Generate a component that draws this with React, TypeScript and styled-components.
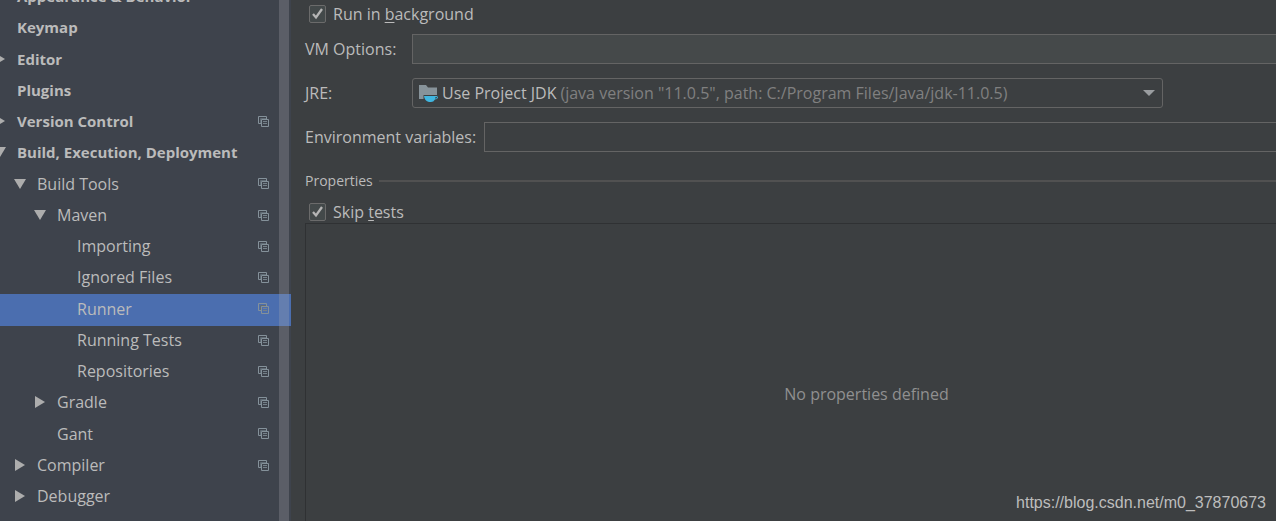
import React from "react";
import styled, { createGlobalStyle } from "styled-components";

const GlobalStyle = createGlobalStyle`
  * { box-sizing: border-box; }
  body {
    margin: 0;
    background: #3c3f41;
    color: #bbbbbb;
    font: 16px/20px "Open Sans", "Noto Sans", sans-serif;
  }
  input, select, button { font: inherit; color: inherit; margin: 0; }
`;

const Window = styled.div`
  position: relative;
  display: flex;
  height: 100vh;
  overflow: hidden;
`;

const Sidebar = styled.nav`
  position: relative;
  flex: 0 0 291px;
  background: #3e434c;
  overflow: hidden;
`;

const Tree = styled.ul`
  display: grid;
  grid-auto-rows: 31px 31px 32px 31px;
  margin: -18px 0 0;
  padding: 0;
  list-style: none;
`;

const TreeItem = styled.li`
  display: grid;
`;

const Row = styled.button<{ $level: number; $selected?: boolean }>`
  display: flex;
  align-items: center;
  padding: 0 22px 3px ${(p) => p.$level * 20}px;
  border: 0;
  background: ${(p) => (p.$selected ? "#4b6eaf" : "transparent")};
  font-weight: ${(p) => (p.$level === 0 ? 700 : 400)};
  font-size: ${(p) => (p.$level === 0 ? 15 : 16)}px;
  text-align: left;
  white-space: nowrap;
`;

const Twist = styled.span`
  flex: 0 0 17px;
  display: flex;
  margin-left: -6px;
  margin-right: 6px;
`;

const Label = styled.span`
  flex: 1;
`;

const Scrollbar = styled.div`
  position: absolute;
  inset: 0 2px 0 auto;
  width: 10px;
  background: rgba(170, 170, 178, 0.27);
  pointer-events: none;
`;

const Main = styled.main`
  flex: 1;
  min-width: 0;
  display: flex;
  flex-direction: column;
  margin: 0 -152px -44px 0;
  padding: 4px 0 0 14px;
`;

const CheckLine = styled.label`
  display: flex;
  align-items: center;
  gap: 7px;
  height: 20px;
  padding-left: 4px;
`;

const CheckFrame = styled.span`
  display: grid;
  width: 17px;
  height: 18px;

  > * { grid-area: 1 / 1; }
  svg { pointer-events: none; }
`;

const Checkbox = styled.input`
  appearance: none;
  width: 17px;
  height: 18px;
  border: 1px solid #6b6b6b;
  border-radius: 2px;
  background: #43494a;

  &:not(:checked) + svg { visibility: hidden; }
`;

const Mnemonic = styled.span`
  text-decoration: underline;
  text-underline-offset: 2px;
`;

const Field = styled.div<{ $labelWidth: number; $gap: number }>`
  display: grid;
  grid-template-columns: ${(p) => p.$labelWidth}px 1fr;
  align-items: center;
  height: 30px;
  margin-top: ${(p) => p.$gap}px;
`;

const TextInput = styled.input<{ $filled?: boolean }>`
  width: 100%;
  height: 30px;
  padding: 0 6px;
  border: 1px solid #646464;
  background: ${(p) => (p.$filled ? "#45494a" : "transparent")};
`;

const Combo = styled.div`
  position: relative;
  max-width: 751px;
  height: 30px;
`;

const Select = styled.select`
  appearance: none;
  width: 100%;
  height: 30px;
  border: 1px solid #646464;
  border-radius: 3px;
  background: transparent;
  color: transparent;
`;

const ComboValue = styled.span`
  position: absolute;
  inset: 0;
  display: flex;
  align-items: center;
  gap: 4px;
  padding: 0 8px 0 7px;
  white-space: nowrap;
  pointer-events: none;
`;

const Detail = styled.span`
  flex: 1;
  color: #808080;
`;

const Heading = styled.h2`
  display: flex;
  align-items: center;
  gap: 6px;
  margin: 19px 0 11px;
  font-size: 14px;
  font-weight: 400;

  &::after {
    content: "";
    flex: 1;
    height: 2px;
    background: #515151;
  }
`;

const PropertiesPanel = styled.section`
  flex: 1;
  display: grid;
  place-items: center;
  margin-top: 1px;
  border: 1px solid #2f3133;
  color: #909090;
`;

const Watermark = styled.span`
  position: absolute;
  right: 10px;
  bottom: 8px;
  color: #bdbdbd;
  font: 16px/20px "Liberation Sans", sans-serif;
`;

const Arrow = ({ open }: { open?: boolean }) => (
  <svg width="12" height="12" viewBox="0 0 12 12" fill="#adadad" aria-hidden="true">
    <path d={open ? "M0 1H12L6 11Z" : "M1 0V12L11 6Z"} />
  </svg>
);

const CopyIcon = () => (
  <svg width="11" height="11" viewBox="0 0 11 11" fill="none" stroke="#84919a" aria-hidden="true">
    <path d="M3 7.5H.5V.5H8.5V3" />
    <path d="M2.500 7V2.500H8" stroke="#606b74" />
    <path d="M3.500 10.500V3.500H10.500V10.500Z" />
    <path d="M5 5.500H9M5 7.500H9" stroke="#75818a" />
  </svg>
);

const CheckIcon = () => (
  <svg width="17" height="18" viewBox="0 0 17 18" fill="none" stroke="#b5b5b5" strokeWidth="2.3" aria-hidden="true">
    <path d="M4 9L7 12.5L13 4" />
  </svg>
);

const JdkIcon = () => (
  <svg width="19" height="18" viewBox="0 0 19 18" aria-hidden="true">
    <path d="M0 1H7L9 3.500H18V11H4.500V15H0Z" fill="#87939a" />
    <path
      fillRule="evenodd"
      d="M5 12H17.500Q19 12 19 13.500Q18.500 15.500 16 15.500Q14.500 18 12 18H10Q5.500 17 5 12ZM16.500 13H18L17.500 14.500H16.200Z"
      fill="#40b6e0"
    />
  </svg>
);

type Node = { name: string; level: number; arrow?: "open" | "closed"; project?: boolean };

const nodes: Node[] = [
  { name: "Appearance & Behavior", level: 0, arrow: "closed" },
  { name: "Keymap", level: 0 },
  { name: "Editor", level: 0, arrow: "closed" },
  { name: "Plugins", level: 0 },
  { name: "Version Control", level: 0, arrow: "closed", project: true },
  { name: "Build, Execution, Deployment", level: 0, arrow: "open" },
  { name: "Build Tools", level: 1, arrow: "open", project: true },
  { name: "Maven", level: 2, arrow: "open", project: true },
  { name: "Importing", level: 3, project: true },
  { name: "Ignored Files", level: 3, project: true },
  { name: "Runner", level: 3, project: true },
  { name: "Running Tests", level: 3, project: true },
  { name: "Repositories", level: 3, project: true },
  { name: "Gradle", level: 2, arrow: "closed", project: true },
  { name: "Gant", level: 2, project: true },
  { name: "Compiler", level: 1, arrow: "closed", project: true },
  { name: "Debugger", level: 1, arrow: "closed" },
];

const CheckOption = ({ children }: { children: React.ReactNode }) => (
  <CheckLine>
    <CheckFrame>
      <Checkbox type="checkbox" defaultChecked />
      <CheckIcon />
    </CheckFrame>
    <span>{children}</span>
  </CheckLine>
);

export default function App() {
  const [selected, setSelected] = React.useState("Runner");
  return (
    <>
      <GlobalStyle />
      <Window>
        <Sidebar aria-label="Settings">
          <Tree>
            {nodes.map((n) => (
              <TreeItem key={n.name}>
                <Row
                  type="button"
                  $level={n.level}
                  $selected={n.name === selected}
                  aria-expanded={n.arrow ? n.arrow === "open" : undefined}
                  onClick={() => setSelected(n.name)}
                >
                  <Twist>{n.arrow && <Arrow open={n.arrow === "open"} />}</Twist>
                  <Label>{n.name}</Label>
                  {n.project && <CopyIcon />}
                </Row>
              </TreeItem>
            ))}
          </Tree>
          <Scrollbar />
        </Sidebar>
        <Main>
          <CheckOption>
            Run in <Mnemonic>b</Mnemonic>ackground
          </CheckOption>
          <Field $labelWidth={107} $gap={10}>
            <label htmlFor="vm">VM Options:</label>
            <TextInput id="vm" $filled />
          </Field>
          <Field $labelWidth={107} $gap={14}>
            <label htmlFor="jre">JRE:</label>
            <Combo>
              <Select id="jre">
                <option>Use Project JDK</option>
              </Select>
              <ComboValue aria-hidden="true">
                <JdkIcon />
                <span>Use Project JDK</span>
                <Detail>(java version "11.0.5", path: C:/Program Files/Java/jdk-11.0.5)</Detail>
                <svg width="12" height="6" viewBox="0 0 12 6" fill="#9a9da0">
                  <path d="M0 0H12L6 6Z" />
                </svg>
              </ComboValue>
            </Combo>
          </Field>
          <Field $labelWidth={179} $gap={14}>
            <label htmlFor="env">Environment variables:</label>
            <TextInput id="env" />
          </Field>
          <Heading>Properties</Heading>
          <CheckOption>
            Skip <Mnemonic>t</Mnemonic>ests
          </CheckOption>
          <PropertiesPanel>No properties defined</PropertiesPanel>
        </Main>
        <Watermark>https://blog.csdn.net/m0_37870673</Watermark>
      </Window>
    </>
  );
}
